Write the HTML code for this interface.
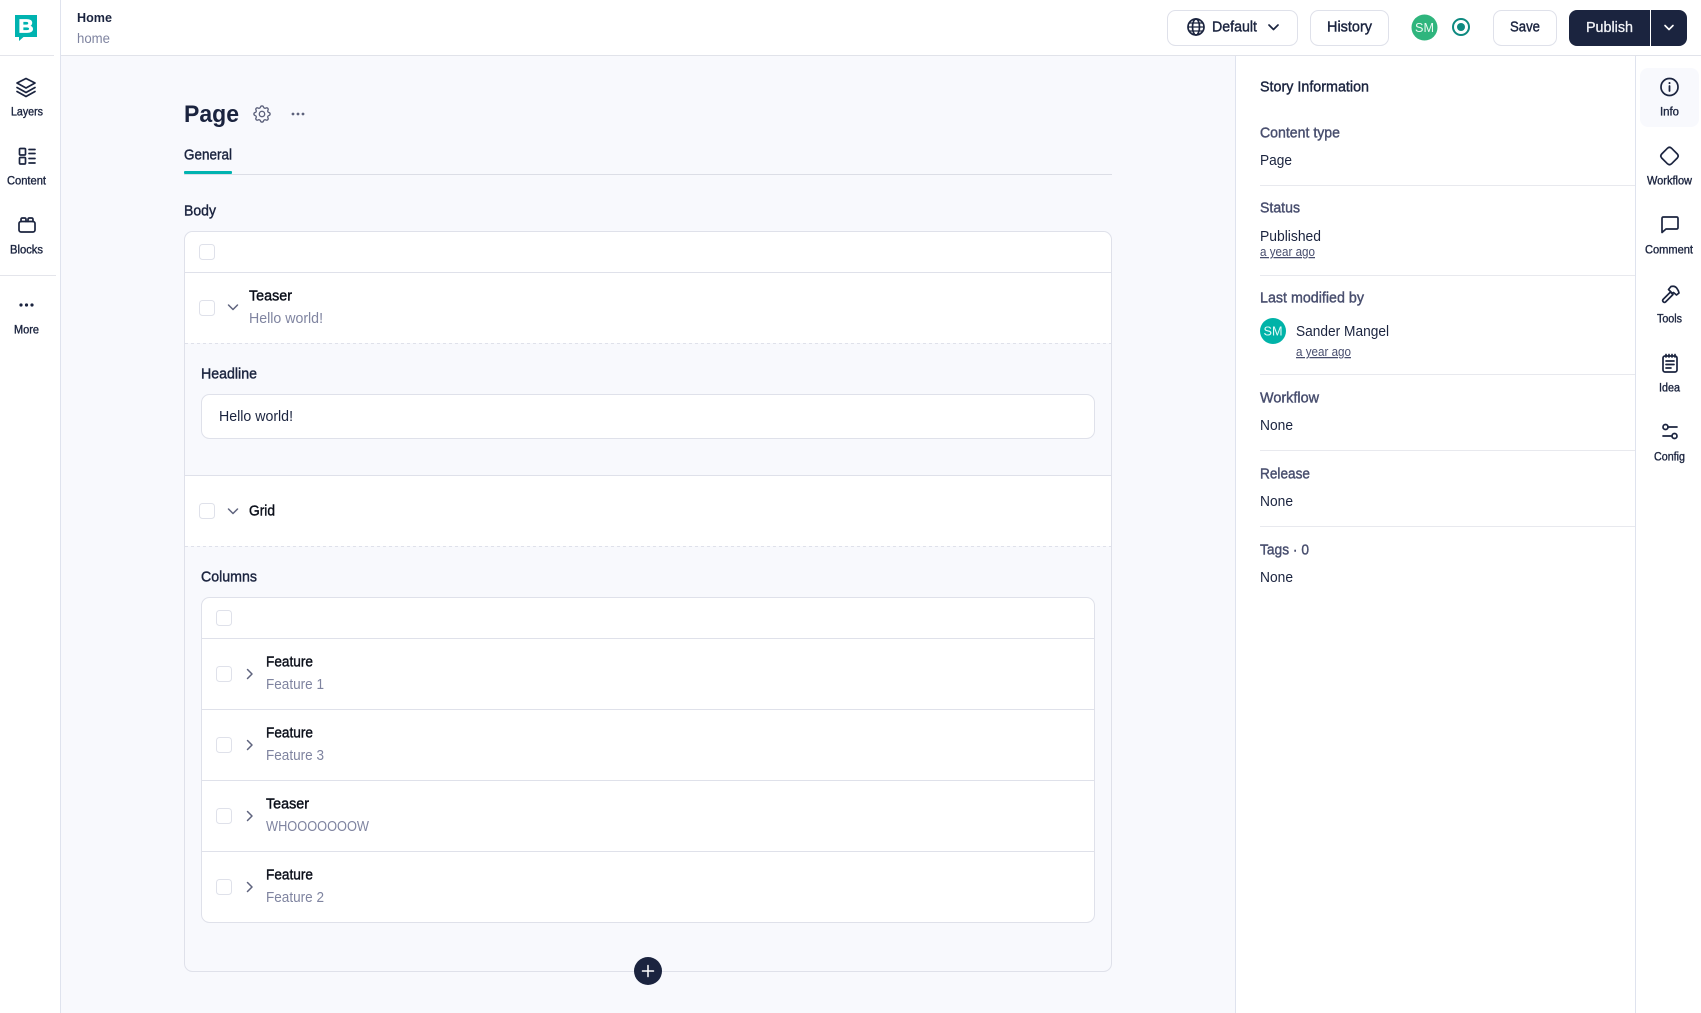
<!DOCTYPE html>
<html lang="en"><head><meta charset="utf-8"><title>Home</title>
<style>
html,body{margin:0;padding:0;background:#fff;width:1701px;height:1013px;overflow:hidden}
svg{display:block;font-family:"Liberation Sans",Arial,sans-serif}
text{font-size:14.5px;fill:#1b243f}
.m{stroke:currentColor;stroke-width:.4px;color:#1b243f;transform:translateY(-.5px)}
.b{font-weight:700}
.s{font-size:11.5px;stroke-width:.35px}
.k{fill:#0b0f1a;color:#0b0f1a}
.g{fill:#7f84a0}
.l{fill:#484e6e;color:#484e6e}
.i{fill:none;stroke:#1b243f;stroke-width:1.7;stroke-linecap:round;stroke-linejoin:round}
.c{fill:#fff;stroke:#dfe1ea;stroke-width:1}
.ch{fill:none;stroke:#5f647e;stroke-width:1.5;stroke-linecap:round;stroke-linejoin:round}
.btn{fill:#fff;stroke:#dfe1ea;stroke-width:1}
</style></head><body>
<svg width="1701" height="1013" viewBox="0 0 1701 1013" xmlns="http://www.w3.org/2000/svg">
<rect width="1701" height="1013" fill="#fff"/>
<rect x="61" y="56" width="1174" height="957" fill="#f8f9fd"/>
<rect x="60" y="0" width="1" height="1013" fill="#dfe3ee"/>
<rect x="61" y="55" width="1640" height="1" fill="#e1e3ea"/>
<rect x="0" y="55" width="54" height="1" fill="#e4e5eb"/>
<rect x="0" y="275" width="56" height="1" fill="#e4e5eb"/>
<rect x="1235" y="56" width="1" height="957" fill="#dfe3ee"/>
<rect x="1635" y="56" width="1" height="957" fill="#dfe3ee"/>

<!-- logo -->
<path d="M15 15H37V37H23.500L19 41V37H15Z" fill="#00b3b0"/>
<text x="26" y="32.500" text-anchor="middle" class="b" style="font-size:18px;fill:#fff;stroke:#fff;stroke-width:.8" textLength="15" lengthAdjust="spacingAndGlyphs">B</text>

<!-- left rail -->
<g class="i">
<path d="M26 78.500L35 83 26 88 17 83Z"/><path d="M17 87.500L26 92.500 35 87.500"/><path d="M17 91.500L26 96.500 35 91.500"/>
<rect x="19.500" y="148.500" width="6" height="6.500" rx="1"/><rect x="19.500" y="157.500" width="6" height="6.500" rx="1"/>
<path d="M29 149.500H35M29 153.500H35M29 158.500H35M29 163H35"/>
<rect x="19" y="221.500" width="16" height="10.500" rx="2"/><path d="M21 221.500V219.500Q21 218 22.500 218H24.500Q26 218 26 219.500V221.500M28 221.500V219.500Q28 218 29.500 218H31.500Q33 218 33 219.500V221.500"/>
</g>
<g fill="#1b243f"><circle cx="21" cy="305" r="1.600"/><circle cx="26.500" cy="305" r="1.600"/><circle cx="32" cy="305" r="1.600"/></g>
<text x="11" y="116" class="s m" textLength="32" lengthAdjust="spacingAndGlyphs">Layers</text>
<text x="7" y="185" class="s m" textLength="39" lengthAdjust="spacingAndGlyphs">Content</text>
<text x="10" y="254" class="s m" textLength="33" lengthAdjust="spacingAndGlyphs">Blocks</text>
<text x="14" y="334" class="s m" textLength="25" lengthAdjust="spacingAndGlyphs">More</text>

<!-- header -->
<text x="77" y="22" class="b" style="font-size:13px" textLength="35" lengthAdjust="spacingAndGlyphs">Home</text>
<text x="77" y="43" class="g" style="font-size:13.500px" textLength="33" lengthAdjust="spacingAndGlyphs">home</text>

<rect class="btn" x="1167.500" y="10.500" width="130" height="35" rx="8"/>
<g class="i" transform="translate(1196 27)"><circle r="8"/><ellipse rx="3.500" ry="8"/><path d="M-8 0H8M-7 -4H7M-7 4H7" stroke-width="1.200"/></g>
<text x="1212" y="32" class="m" textLength="45" lengthAdjust="spacingAndGlyphs">Default</text>
<path class="i" d="M1269 25L1273.500 29.500 1278 25"/>
<rect class="btn" x="1310.500" y="10.500" width="78" height="35" rx="8"/>
<text x="1327" y="32" class="m" textLength="45" lengthAdjust="spacingAndGlyphs">History</text>
<circle cx="1424.500" cy="27.500" r="13" fill="#2fb57d"/>
<text x="1424.500" y="32" text-anchor="middle" style="font-size:12.500px;fill:#e9f9f1" textLength="19" lengthAdjust="spacingAndGlyphs">SM</text>
<circle cx="1461" cy="27" r="8" fill="none" stroke="#0e8a80" stroke-width="2"/><circle cx="1461" cy="27" r="4" fill="#0e8a80"/>
<rect class="btn" x="1493.500" y="10.500" width="63" height="35" rx="8"/>
<text x="1510" y="32" class="m" textLength="30" lengthAdjust="spacingAndGlyphs">Save</text>
<path d="M1577 10H1650V46H1577A8 8 0 0 1 1569 38V18A8 8 0 0 1 1577 10Z" fill="#1b243f"/>
<path d="M1651 10H1679A8 8 0 0 1 1687 18V38A8 8 0 0 1 1679 46H1651Z" fill="#1b243f"/>
<text x="1586" y="32" style="font-size:14.500px;fill:#f2f3f7;stroke:#f2f3f7;stroke-width:.3" textLength="47" lengthAdjust="spacingAndGlyphs">Publish</text>
<path d="M1665 25.500L1669 29.500 1673 25.500" fill="none" stroke="#fff" stroke-width="1.600" stroke-linecap="round" stroke-linejoin="round"/>

<!-- title -->
<text x="184" y="122" class="b" style="font-size:24.500px" textLength="55" lengthAdjust="spacingAndGlyphs">Page</text>
<g transform="translate(251.200 103.200) scale(.9)" fill="none" stroke="#5d627c" stroke-width="1.500" stroke-linecap="round" stroke-linejoin="round"><path d="M10.325 4.317c.426-1.756 2.924-1.756 3.35 0a1.724 1.724 0 0 0 2.573 1.066c1.543-.94 3.31.826 2.37 2.37a1.724 1.724 0 0 0 1.065 2.572c1.756.426 1.756 2.924 0 3.35a1.724 1.724 0 0 0-1.066 2.573c.94 1.543-.826 3.31-2.37 2.37a1.724 1.724 0 0 0-2.572 1.065c-.426 1.756-2.924 1.756-3.35 0a1.724 1.724 0 0 0-2.573-1.066c-1.543.94-3.31-.826-2.37-2.37a1.724 1.724 0 0 0-1.065-2.572c-1.756-.426-1.756-2.924 0-3.35a1.724 1.724 0 0 0 1.066-2.573c-.94-1.543.826-3.31 2.37-2.37c1 .608 2.296.07 2.572-1.065z"/><circle cx="12" cy="12" r="3"/></g>
<g fill="#5d627c"><circle cx="293" cy="114" r="1.400"/><circle cx="298" cy="114" r="1.400"/><circle cx="303" cy="114" r="1.400"/></g>
<text x="184" y="160" class="m" textLength="48" lengthAdjust="spacingAndGlyphs">General</text>
<rect x="184" y="174" width="928" height="1" fill="#dcdee6"/>
<rect x="184" y="171" width="48" height="3" rx="1" fill="#00b3b0"/>
<text x="184" y="216" class="m" textLength="32" lengthAdjust="spacingAndGlyphs">Body</text>

<!-- outer card -->
<rect x="184.500" y="231.500" width="927" height="740" rx="8" fill="#f8f9fd" stroke="#dfe1ea"/>
<path d="M185 272V240A8 8 0 0 1 193 232H1103A8 8 0 0 1 1111 240V272Z" fill="#fff"/>
<rect x="185" y="273" width="926" height="70" fill="#fff"/>
<rect x="185" y="476" width="926" height="70" fill="#fff"/>
<rect x="185" y="272" width="926" height="1" fill="#dfe1ea"/>
<rect x="185" y="475" width="926" height="1" fill="#dfe1ea"/>
<path d="M185 343.500H1111M185 546.500H1111" stroke="#dfe1ea" stroke-dasharray="3 3"/>

<rect class="c" x="199.500" y="244.500" width="15" height="15" rx="3"/>
<rect class="c" x="199.500" y="300.500" width="15" height="15" rx="3"/>
<path class="ch" d="M228.500 305L233 309.500 237.500 305"/>
<text x="249" y="301" class="m k" textLength="43" lengthAdjust="spacingAndGlyphs">Teaser</text>
<text x="249" y="323" class="g" textLength="74" lengthAdjust="spacingAndGlyphs">Hello world!</text>

<text x="201" y="379" class="m" textLength="56" lengthAdjust="spacingAndGlyphs">Headline</text>
<rect x="201.500" y="394.500" width="893" height="44" rx="8" fill="#fff" stroke="#dfe1ea"/>
<text x="219" y="421" textLength="74" lengthAdjust="spacingAndGlyphs">Hello world!</text>

<rect class="c" x="199.500" y="503.500" width="15" height="15" rx="3"/>
<path class="ch" d="M228.500 509L233 513.500 237.500 509"/>
<text x="249" y="516" class="m k" textLength="26" lengthAdjust="spacingAndGlyphs">Grid</text>
<text x="201" y="582" class="m" textLength="56" lengthAdjust="spacingAndGlyphs">Columns</text>

<!-- inner card -->
<rect x="201.500" y="597.500" width="893" height="325" rx="8" fill="#fff" stroke="#dfe1ea"/>
<g fill="#dfe1ea"><rect x="202" y="638" width="892" height="1"/><rect x="202" y="709" width="892" height="1"/><rect x="202" y="780" width="892" height="1"/><rect x="202" y="851" width="892" height="1"/></g>
<rect class="c" x="216.500" y="610.500" width="15" height="15" rx="3"/>

<rect class="c" x="216.500" y="666.500" width="15" height="15" rx="3"/>
<path class="ch" d="M247.500 669.500L252 674 247.500 678.500"/>
<text x="266" y="667" class="m k" textLength="47" lengthAdjust="spacingAndGlyphs">Feature</text>
<text x="266" y="689" class="g" textLength="58" lengthAdjust="spacingAndGlyphs">Feature 1</text>

<rect class="c" x="216.500" y="737.500" width="15" height="15" rx="3"/>
<path class="ch" d="M247.500 740.500L252 745 247.500 749.500"/>
<text x="266" y="738" class="m k" textLength="47" lengthAdjust="spacingAndGlyphs">Feature</text>
<text x="266" y="760" class="g" textLength="58" lengthAdjust="spacingAndGlyphs">Feature 3</text>

<rect class="c" x="216.500" y="808.500" width="15" height="15" rx="3"/>
<path class="ch" d="M247.500 811.500L252 816 247.500 820.500"/>
<text x="266" y="809" class="m k" textLength="43" lengthAdjust="spacingAndGlyphs">Teaser</text>
<text x="266" y="831" class="g" textLength="103" lengthAdjust="spacingAndGlyphs">WHOOOOOOOW</text>

<rect class="c" x="216.500" y="879.500" width="15" height="15" rx="3"/>
<path class="ch" d="M247.500 882.500L252 887 247.500 891.500"/>
<text x="266" y="880" class="m k" textLength="47" lengthAdjust="spacingAndGlyphs">Feature</text>
<text x="266" y="902" class="g" textLength="58" lengthAdjust="spacingAndGlyphs">Feature 2</text>

<circle cx="648" cy="971" r="14" fill="#1b243f"/>
<path d="M642.500 971H653.500M648 965.500V976.500" stroke="#fff" stroke-width="1.500" stroke-linecap="round"/>

<!-- right panel -->
<g fill="#e8e9ee"><rect x="1260" y="185" width="375" height="1"/><rect x="1260" y="275" width="375" height="1"/><rect x="1260" y="374" width="375" height="1"/><rect x="1260" y="450" width="375" height="1"/><rect x="1260" y="526" width="375" height="1"/></g>
<text x="1260" y="92" class="m" textLength="109" lengthAdjust="spacingAndGlyphs">Story Information</text>
<text x="1260" y="138" class="l m" textLength="80" lengthAdjust="spacingAndGlyphs">Content type</text>
<text x="1260" y="165" textLength="32" lengthAdjust="spacingAndGlyphs">Page</text>
<text x="1260" y="213" class="l m" textLength="40" lengthAdjust="spacingAndGlyphs">Status</text>
<text x="1260" y="241" textLength="61" lengthAdjust="spacingAndGlyphs">Published</text>
<text x="1260" y="256" class="l" style="font-size:12.500px;text-decoration:underline" textLength="55" lengthAdjust="spacingAndGlyphs">a year ago</text>
<text x="1260" y="303" class="l m" textLength="104" lengthAdjust="spacingAndGlyphs">Last modified by</text>
<circle cx="1273" cy="331" r="13" fill="#00b3a8"/>
<text x="1273" y="335.500" text-anchor="middle" style="font-size:12.500px;fill:#e6fbf9" textLength="19" lengthAdjust="spacingAndGlyphs">SM</text>
<text x="1296" y="336" textLength="93" lengthAdjust="spacingAndGlyphs">Sander Mangel</text>
<text x="1296" y="356" class="l" style="font-size:12.500px;text-decoration:underline" textLength="55" lengthAdjust="spacingAndGlyphs">a year ago</text>
<text x="1260" y="403" class="l m" textLength="59" lengthAdjust="spacingAndGlyphs">Workflow</text>
<text x="1260" y="430" textLength="33" lengthAdjust="spacingAndGlyphs">None</text>
<text x="1260" y="479" class="l m" textLength="50" lengthAdjust="spacingAndGlyphs">Release</text>
<text x="1260" y="506" textLength="33" lengthAdjust="spacingAndGlyphs">None</text>
<text x="1260" y="555" class="l m" textLength="49" lengthAdjust="spacingAndGlyphs">Tags · 0</text>
<text x="1260" y="582" textLength="33" lengthAdjust="spacingAndGlyphs">None</text>

<!-- right rail -->
<rect x="1640" y="68" width="59" height="59" rx="8" fill="#f8f9fd"/>
<g class="i">
<circle cx="1669.500" cy="87" r="8.500"/><path d="M1669.500 86V91" stroke-width="1.800"/><path d="M1669.500 83V83.100" stroke-width="2"/>
<path d="M1667.500 148.200Q1669.500 146.400 1671.500 148.200L1677.300 154Q1679.100 156 1677.300 158L1671.500 163.800Q1669.500 165.600 1667.500 163.800L1661.700 158Q1659.900 156 1661.700 154Z"/>
<path d="M1662 232.500V218.500Q1662 217 1663.500 217H1676.500Q1678 217 1678 218.500V227.500Q1678 229 1676.500 229H1666Z"/>
<path d="M1663 299.500L1670.500 292 1673 294.500 1665.500 302Q1664.500 302.800 1663.500 302L1663 301.500Q1662.300 300.500 1663 299.500Z"/>
<path d="M1668.500 289.500L1671 286.500Q1675 285.500 1677 288.500 1678.500 290.500 1679 293L1676.500 295 1673.500 292.500 1672.500 293.500Z"/>
<rect x="1663" y="356" width="14" height="16" rx="2"/>
<path d="M1666 354.500V357M1669 354.500V357M1672 354.500V357M1675 354.500V357M1666 361H1674M1666 364.500H1674M1666 368H1671"/>
<circle cx="1665.500" cy="427" r="2.500"/><path d="M1668 427H1677"/>
<circle cx="1674.500" cy="436" r="2.500"/><path d="M1663 436H1672"/>
</g>
<text x="1660" y="116" class="s m" textLength="19" lengthAdjust="spacingAndGlyphs">Info</text>
<text x="1647" y="185" class="s m" textLength="45" lengthAdjust="spacingAndGlyphs">Workflow</text>
<text x="1645" y="254" class="s m" textLength="48" lengthAdjust="spacingAndGlyphs">Comment</text>
<text x="1657" y="323" class="s m" textLength="25" lengthAdjust="spacingAndGlyphs">Tools</text>
<text x="1659" y="392" class="s m" textLength="21" lengthAdjust="spacingAndGlyphs">Idea</text>
<text x="1654" y="461" class="s m" textLength="31" lengthAdjust="spacingAndGlyphs">Config</text>
</svg>
</body></html>
